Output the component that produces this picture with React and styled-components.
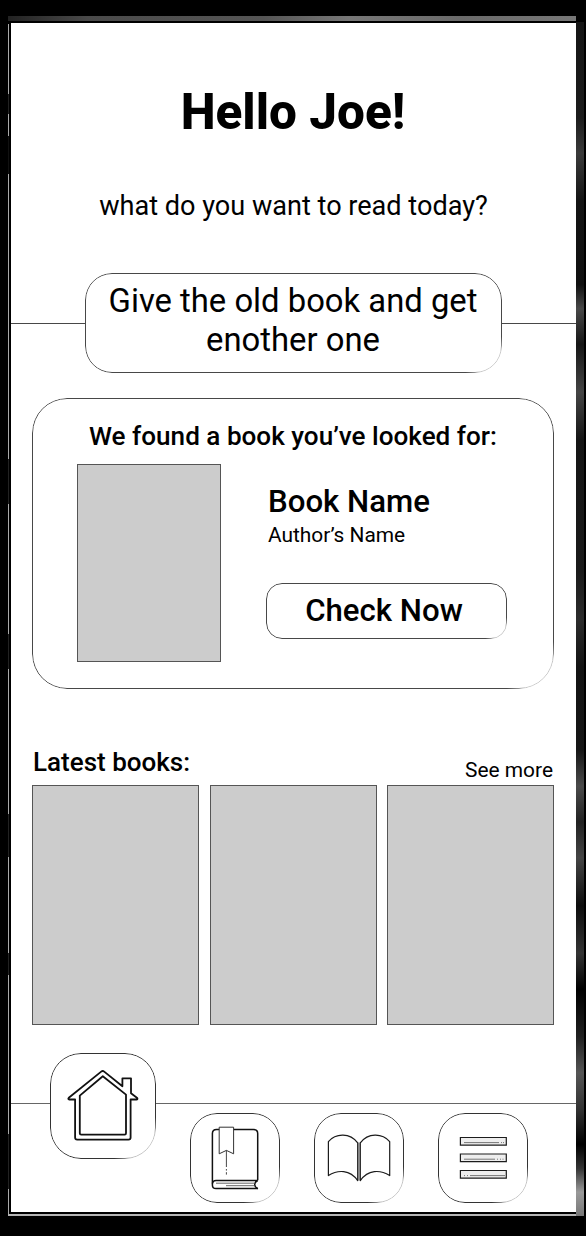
import React from "react";
import styled, { createGlobalStyle, css } from "styled-components";

const GlobalStyle = createGlobalStyle`
  *, *::before, *::after { box-sizing: border-box; }
  body {
    margin: 0;
    background: #000;
    color: #000;
    font-family: Roboto, "Liberation Sans", sans-serif;
  }
  h1, h2, h3, p { margin: 0; }
`;

const ink = "#484848";

const fadingCorner = css`
  mask-image: radial-gradient(
    circle at 100% 100%,
    rgba(0, 0, 0, 0.3) 0,
    rgba(0, 0, 0, 0.3) ${(p) => p.$radius * 0.75}px,
    #000 ${(p) => p.$radius * 1.35}px
  );
`;

/* Pencil-like outline whose lower right corner thins out */
const Outline = styled.div`
  position: relative;
  background: #fff;
  border-radius: ${(p) => p.$radius}px;
  &::before {
    content: "";
    position: absolute;
    inset: 0;
    border: ${(p) => p.$stroke || 1}px solid ${(p) => p.$ink || ink};
    border-radius: inherit;
    pointer-events: none;
    ${fadingCorner}
  }
`;

const Frame = styled.div`
  width: 576px;
  height: 1200px;
  margin: 16px 0 20px 8px;
  padding: 7px 8px 4px 3px;
  background:
    linear-gradient(90deg, #222, #4a4a4a 14%, #555 45%, #777 60%, #6a6a6a 80%, #777) 0 0 / 568px 5px no-repeat,
    linear-gradient(#b5b5b5, #b5b5b5) 0 1198px / 568px 2px no-repeat,
    linear-gradient(
      180deg, #aaa 0 70px, #222 70px 90px, #aaa 90px 112px, #111 112px 150px, #aaa 150px 435px,
      #222 435px 480px, #aaa 480px 610px, #222 610px 645px, #aaa 645px 790px, #222 790px 833px,
      #aaa 833px 929px, #222 929px 951px, #aaa 951px 1110px, #222 1110px 1165px, #aaa 1165px
    ) 0 8px / 1px 1190px no-repeat,
    linear-gradient(
      180deg, #151515 0, #1c1c1c 8%, #3a3a3a 11%, #141414 15%, #101010 22%, #484848 24%,
      #161616 27%, #444 31%, #151515 35%, #1a1a1a 46%, #2c2c2c 50%, #131313 54%, #161616 61%,
      #4a4a4a 64%, #222 67%, #444 70%, #0d0d0d 74%, #333 78%, #000 81%, #202020 85%,
      #555 88%, #333 91%, #000 94%, #333 96%, #999 98%, #777 100%
    ) 568px 6px / 8px 1194px no-repeat,
    #000;
`;

const Screen = styled.main`
  width: 565px;
  height: 1189px;
  background: #fff;
  display: flex;
  flex-direction: column;
`;

const Greeting = styled.h1`
  margin-top: 59px;
  padding-right: 1px;
  text-align: center;
  font-size: 49.5px;
  line-height: 60px;
  font-weight: 800;
`;

const Question = styled.p`
  margin-top: 48px;
  text-align: center;
  font-size: 27.1px;
  line-height: 32px;
`;

const PromoRow = styled.div`
  margin-top: 51px;
  display: flex;
  align-items: center;
`;

const Rule = styled.span`
  flex: 1;
  height: 1px;
  background: ${ink};
`;

const Promo = styled(Outline)`
  width: 417px;
  height: 100px;
  padding: 9px 21px 7px 20px;
  text-align: center;
  font-size: 32.8px;
  line-height: 39px;
`;

const FoundCard = styled(Outline)`
  margin: 25px 22px 0 21px;
  height: 291px;
  padding-top: 23px;
`;

const FoundTitle = styled.h2`
  text-align: center;
  font-size: 26.1px;
  line-height: 30px;
  font-weight: 500;
`;

const FoundBody = styled.div`
  display: flex;
  margin: 13px 0 0 45px;
`;

const Cover = styled.div`
  width: ${(p) => p.$width}px;
  height: ${(p) => p.$height}px;
  background: #ccc;
  border: 1px solid #555;
`;

const Info = styled.div`
  margin-left: 45px;
  padding-top: 20px;
`;

const BookName = styled.h3`
  margin-left: 2px;
  font-size: 31.2px;
  line-height: 36px;
  font-weight: 500;
`;

const Author = styled.p`
  margin: 2px 0 0 2px;
  font-size: 20.9px;
  line-height: 26px;
`;

const CheckButton = styled(Outline).attrs({ as: "button" })`
  display: block;
  width: 241px;
  height: 56px;
  margin-top: 35px;
  padding: 0 5px 0 0;
  border: 0;
  color: inherit;
  font: 500 31.2px/56px Roboto, "Liberation Sans", sans-serif;
`;

const LatestHeader = styled.div`
  display: flex;
  justify-content: space-between;
  margin: 58px 23px 0 22px;
`;

const LatestTitle = styled.h2`
  font-size: 26px;
  line-height: 30px;
  font-weight: 500;
`;

const SeeMore = styled.span`
  padding-top: 11px;
  font-size: 20.9px;
  line-height: 25px;
`;

const Shelf = styled.div`
  display: flex;
  justify-content: space-between;
  margin: 2px 22px 0 21px;
`;

const NavBar = styled.nav`
  margin-top: auto;
  height: 109px;
  border-top: 1px solid #666;
  display: flex;
  align-items: flex-start;
  padding-left: 39px;
`;

const Tile = styled(Outline)`
  width: ${(p) => p.$size}px;
  height: ${(p) => p.$size}px;
  margin-top: ${(p) => p.$top}px;
  margin-right: 34px;
  svg { display: block; width: 100%; height: 100%; }
`;

const HomeIcon = () => (
  <svg viewBox="50 1053 106 106" fill="none" stroke="#111" strokeWidth="1.8" strokeLinejoin="round">
    <path d="M101.2 1071.6Q102.7 1070.4 104.2 1071.6L122.4 1086.2V1078.3H131V1093.3L137.2 1098Q138 1099.4 136.4 1099.5H130.6V1137.5Q130.6 1139.6 128.5 1139.6H77.2Q75.1 1139.6 75.1 1137.5V1099.5H69.4Q67.6 1099.2 68.8 1097.7Z" />
    <path d="M102.8 1076.3L126 1094.6V1133.3Q126 1134.6 124.7 1134.6H81.2Q79.8 1134.6 79.8 1133.3V1095.6Z" />
  </svg>
);

const BookmarkIcon = () => (
  <svg viewBox="190 1113 90 90" fill="none" stroke="#111" strokeWidth="1.5">
    <path d="M257.7 1180.3V1133.5Q257.7 1129.4 253.5 1129.4H216.5Q212.4 1129.4 212.4 1133.5V1185Q212.4 1188.6 216 1188.6H258" />
    <path d="M212.4 1183.5Q212.8 1180.5 216 1180.5H257.7Q254.2 1182.3 254.8 1185Q255 1187.6 258 1188.6" />
    <path d="M216 1183.2H254.5M226 1185.7H254" stroke="#555" strokeWidth="0.9" />
    <path d="M219.2 1127.2H233.6V1153.8L226.4 1150.4L219.2 1153.8Z" fill="#fff" stroke="#333" strokeWidth="1" />
    <path d="M226.4 1150.4V1167M226.4 1169V1170.6M226.4 1172.2V1174.6" stroke="#333" strokeWidth="0.9" />
  </svg>
);

const OpenBookIcon = () => (
  <svg viewBox="314 1113 90 90" fill="none" stroke="#1c1c1c" strokeWidth="1.2" strokeLinejoin="round">
    <path d="M359 1142.5V1180.5" stroke="#aaa" strokeWidth="1.8" />
    <path d="M328.4 1141.6C336 1132.8 350 1132.8 357.7 1142.8V1180.6C350 1169.6 338 1169.4 328.4 1175.6Z" />
    <path d="M389.7 1141.6C382 1132.8 368 1132.8 360.3 1142.8V1180.6C368 1169.6 380 1169.4 389.7 1175.6Z" />
  </svg>
);

const MenuIcon = () => (
  <svg viewBox="438 1113 90 90" fill="none" stroke="#1c1c1c" strokeWidth="1.2">
    <path d="M460.4 1137.5H506.3V1145.2H460.4ZM460.4 1154H506.3V1161.7H460.4ZM460.4 1170.5H506.3V1178.2H460.4Z" fill="#eee" />
    <path d="M464 1142.6H499M501 1142.6H502M503 1142.6H504M464 1159.2H495M497 1159.2H498M500 1159.2H501M502.5 1159.2H503.5M470 1175.6H505M467 1175.6H468M464 1175.6H465" stroke="#777" strokeWidth="1" />
  </svg>
);

const navItems = [
  { label: "Home", Icon: HomeIcon, size: 106, radius: 31, top: -51 },
  { label: "Saved", Icon: BookmarkIcon, size: 90, radius: 27, top: 9 },
  { label: "Library", Icon: OpenBookIcon, size: 90, radius: 27, top: 9 },
  { label: "Menu", Icon: MenuIcon, size: 90, radius: 27, top: 9 },
];

export default function App() {
  return (
    <>
      <GlobalStyle />
      <Frame>
        <Screen>
          <Greeting>Hello Joe!</Greeting>
          <Question>what do you want to read today?</Question>
          <PromoRow>
            <Rule />
            <Promo $radius={27}>
              Give the old book and get
              <br />
              enother one
            </Promo>
            <Rule />
          </PromoRow>
          <FoundCard $radius={35}>
            <FoundTitle>We found a book you’ve looked for:</FoundTitle>
            <FoundBody>
              <Cover $width={144} $height={198} />
              <Info>
                <BookName>Book Name</BookName>
                <Author>Author’s Name</Author>
                <CheckButton $radius={16}>Check Now</CheckButton>
              </Info>
            </FoundBody>
          </FoundCard>
          <LatestHeader>
            <LatestTitle>Latest books:</LatestTitle>
            <SeeMore>See more</SeeMore>
          </LatestHeader>
          <Shelf>
            {["left", "middle", "right"].map((slot) => (
              <Cover key={slot} $width={167} $height={240} />
            ))}
          </Shelf>
          <NavBar>
            {navItems.map(({ label, Icon, size, radius, top }) => (
              <Tile key={label} $size={size} $radius={radius} $top={top} $ink="#333">
                <Icon />
              </Tile>
            ))}
          </NavBar>
        </Screen>
      </Frame>
    </>
  );
}
